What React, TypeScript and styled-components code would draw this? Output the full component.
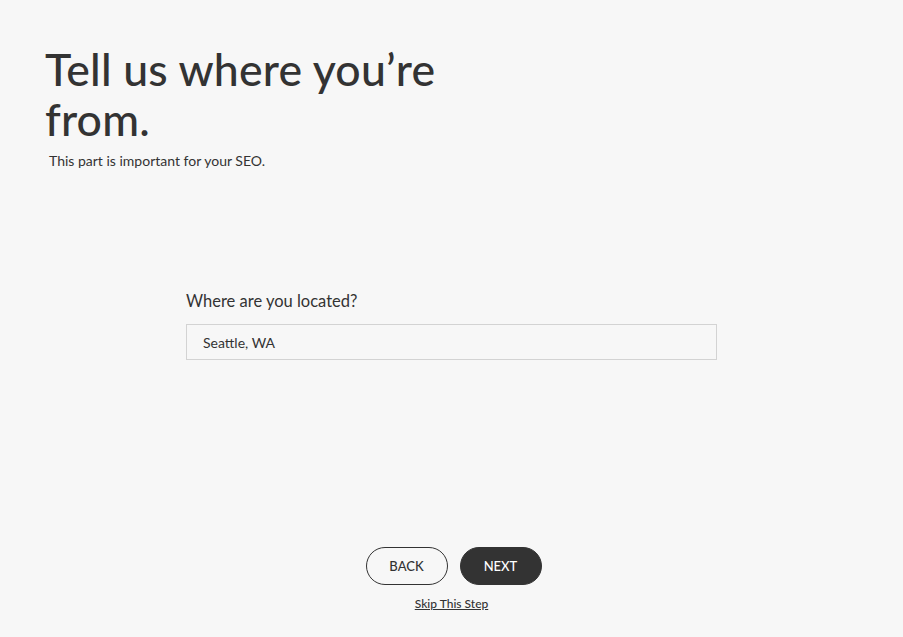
import React from "react";
import styled, { createGlobalStyle } from "styled-components";

const Global = createGlobalStyle`
  html, body { margin: 0; padding: 0; background: #f7f7f7; }
  body { font-family: "Lato", "Noto Sans", sans-serif; color: #333; }
  * { box-sizing: border-box; }
`;

const Page = styled.div`
  width: 903px;
  height: 637px;
  display: flex;
  flex-direction: column;
  background: #f7f7f7;
`;

const Header = styled.header`
  padding: 44px 0 0 45px;
  display: flex;
  flex-direction: column;
`;

const Title = styled.h1`
  margin: 0;
  width: 410px;
  font-size: 44.6px;
  line-height: 50px;
  font-weight: 500;
  color: #333;
  letter-spacing: 0.2px;
`;

const Subtitle = styled.p`
  margin: 8px 0 0 4px;
  font-size: 14px;
  line-height: 18px;
  color: #333;
`;

const Form = styled.section`
  width: 531px;
  margin: 120px auto 0;
  display: flex;
  flex-direction: column;
  gap: 12px;
`;

const Label = styled.label`
  font-size: 16.5px;
  line-height: 22px;
  color: #333;
`;

const Input = styled.input`
  width: 100%;
  height: 36px;
  border: 1px solid #d3d3d3;
  background: #f7f7f7;
  padding: 0 16px;
  font-family: inherit;
  font-size: 14px;
  color: #333;
  outline: none;
`;

const Footer = styled.footer`
  margin-top: auto;
  padding-bottom: 26px;
  display: flex;
  flex-direction: column;
  align-items: center;
  gap: 10px;
`;

const Buttons = styled.div`
  display: flex;
  gap: 12px;
  margin: 0 0 1px 4px;
`;

const Button = styled.button<{ $primary?: boolean }>`
  width: 82px;
  height: 38px;
  border-radius: 19px;
  border: 1.5px solid #333;
  background: ${(p) => (p.$primary ? "#333" : "transparent")};
  color: ${(p) => (p.$primary ? "#fff" : "#333")};
  font-family: inherit;
  font-size: 13px;
  font-weight: 500;
  text-transform: uppercase;
  cursor: pointer;
`;

const Skip = styled.a`
  font-size: 12px;
  font-weight: 500;
  color: #333;
  text-decoration: underline;
  cursor: pointer;
`;

export default function App() {
  return (
    <Page>
      <Global />
      <Header>
        <Title>Tell us where you’re from.</Title>
        <Subtitle>This part is important for your SEO.</Subtitle>
      </Header>
      <Form>
        <Label htmlFor="loc">Where are you located?</Label>
        <Input id="loc" defaultValue="Seattle, WA" />
      </Form>
      <Footer>
        <Buttons>
          <Button>Back</Button>
          <Button $primary>Next</Button>
        </Buttons>
        <Skip>Skip This Step</Skip>
      </Footer>
    </Page>
  );
}
